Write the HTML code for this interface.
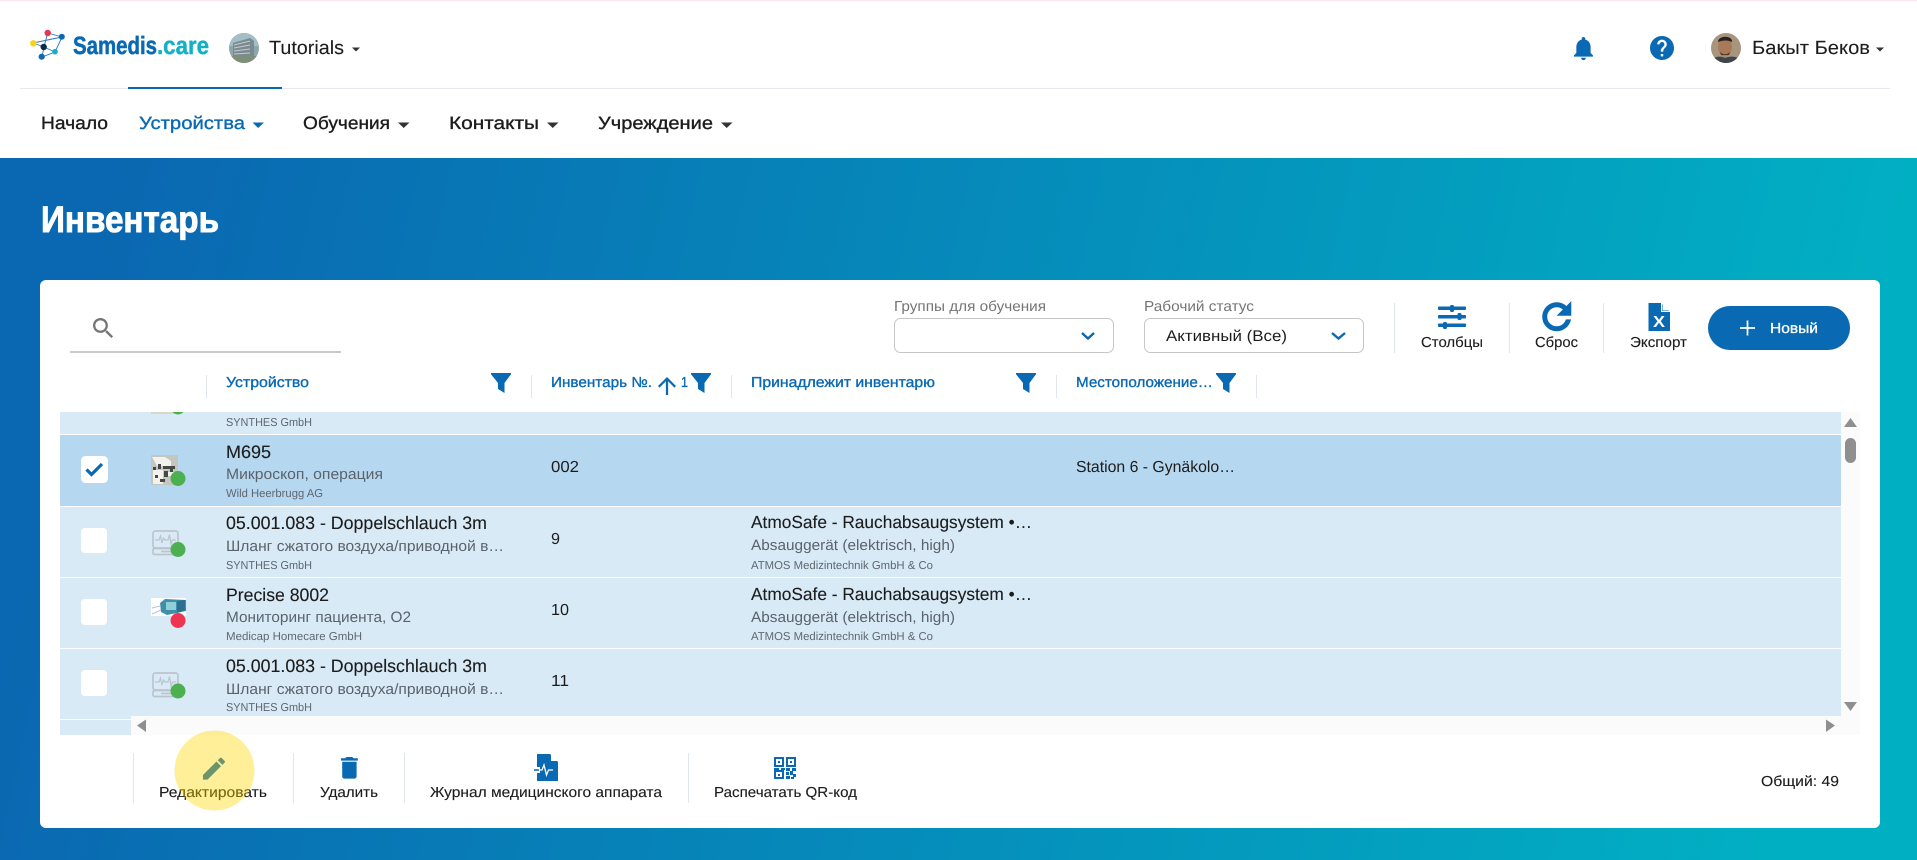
<!DOCTYPE html>
<html lang="ru">
<head>
<meta charset="utf-8">
<title>Инвентарь</title>
<style>
html,body{margin:0;padding:0;background:#fff;width:1917px;height:860px;overflow:hidden}
svg{display:block}
text{font-family:"Liberation Sans",Arial,sans-serif;text-rendering:geometricPrecision}
.m{font-size:18px;fill:#1c1c1c;stroke:#1c1c1c;stroke-width:.12}
.s{font-size:15px;fill:#5a636b}
.t{font-size:11.5px;fill:#5f676e}
.h{font-size:14.5px;fill:#0a69b3;stroke:#0a69b3;stroke-width:.35}
.n{font-size:18px;fill:#1c1c1c;stroke:#1c1c1c;stroke-width:.35}
.a{font-size:14.5px;fill:#1c1c1c;stroke:#1c1c1c;stroke-width:.12}
.l{font-size:14.5px;fill:#757575}
.sep{stroke:#e2e7ee;stroke-width:1}
</style>
</head>
<body>
<svg xmlns="http://www.w3.org/2000/svg" width="1917" height="860" viewBox="0 0 1917 860">
<defs>
<linearGradient id="bg" gradientUnits="userSpaceOnUse" x1="80" y1="300" x2="1800" y2="680">
<stop offset="0" stop-color="#0a67b1"/><stop offset="1" stop-color="#01afc3"/>
</linearGradient>
<path id="f" d="M0 0H20V1.2L13.5 10V20L7 16V10L0 1.2Z" fill="#0a69b3"/>
<clipPath id="c1"><circle cx="244" cy="48" r="15"/></clipPath>
<clipPath id="c2"><circle cx="1726" cy="48" r="15"/></clipPath>
<clipPath id="c3"><rect x="60" y="412" width="200" height="22"/></clipPath>
<g id="dev" fill="none" stroke="#bcc4cb" stroke-width="1.700">
<rect x="1" y="1" width="25" height="17" rx="2.500"/>
<rect x="1" y="18.500" width="26" height="6" rx="1.500"/>
<path d="M3 10H7L8.500 6L10 13L11.500 8L13 10H16L17.500 4.500L19 14L20.500 10H24" stroke-width="1.200"/>
<path d="M9 21.500H20" stroke-width="1.700"/>
</g>
</defs>

<!-- header -->
<rect width="1917" height="158" fill="#fff"/>
<rect width="1917" height="1" fill="#fde6ec"/>
<rect x="20" y="88" width="1870" height="1" fill="#e6e9ef"/>
<rect x="128" y="87" width="154" height="2" fill="#0a69b3"/>

<!-- logo -->
<path d="M33 43L44 47L55 52M47.700 33L44 47L42 57L55 52L62 37L47.700 33M33 43L62 37" stroke="#2a78b8" stroke-width=".9" fill="none"/>
<circle cx="47.700" cy="33" r="3.200" fill="#ea3450"/>
<circle cx="33.300" cy="43.300" r="3.200" fill="#fcd116"/>
<circle cx="61.800" cy="36.700" r="3" fill="#0a69b3"/>
<circle cx="43.700" cy="47" r="3.200" fill="#0b2a4a"/>
<circle cx="55" cy="51.700" r="2.800" fill="#12b1c7"/>
<circle cx="41.700" cy="56.700" r="3.100" fill="#0a69b3"/>
<text x="73" y="54" font-size="25" font-weight="700" fill="#0a69b3" stroke="#0a69b3" stroke-width=".5" textLength="84" lengthAdjust="spacingAndGlyphs">Samedis</text>
<text x="157" y="54" font-size="25" font-weight="700" fill="#12b1c7" stroke="#12b1c7" stroke-width=".4" textLength="52" lengthAdjust="spacingAndGlyphs">.care</text>

<!-- workspace -->
<g clip-path="url(#c1)">
<rect x="229" y="33" width="30" height="30" fill="#8ba6ad"/>
<path d="M229 33H259V46H229Z" fill="#a3bec6"/>
<path d="M233 43L250 38L254 41V58H233Z" fill="#7b8a90"/>
<path d="M234 45L250 41M234 48L250 45M234 51L250 49M234 54L250 53" stroke="#c4ccd0" stroke-width="1"/>
<rect x="229" y="56" width="30" height="7" fill="#7d8f78"/>
</g>
<text x="269" y="54" class="n" style="stroke-width:.1;font-size:19px" textLength="75" lengthAdjust="spacingAndGlyphs">Tutorials</text>
<path d="M352 47.500H360L356 51.500Z" fill="#333"/>

<!-- nav -->
<text x="41" y="129" class="n" textLength="67" lengthAdjust="spacingAndGlyphs">Начало</text>
<text x="139" y="129" class="n" style="fill:#0a69b3;stroke:#0a69b3" textLength="106" lengthAdjust="spacingAndGlyphs">Устройства</text>
<path d="M252.500 122.500H264L258.200 128Z" fill="#0a69b3"/>
<text x="303" y="129" class="n" textLength="87" lengthAdjust="spacingAndGlyphs">Обучения</text>
<path d="M398 122.500H409.500L403.700 128Z" fill="#333"/>
<text x="449" y="129" class="n" textLength="90" lengthAdjust="spacingAndGlyphs">Контакты</text>
<path d="M547 122.500H558.500L552.700 128Z" fill="#333"/>
<text x="598" y="129" class="n" textLength="115" lengthAdjust="spacingAndGlyphs">Учреждение</text>
<path d="M721 122.500H732.500L726.700 128Z" fill="#333"/>

<!-- header right -->
<path transform="translate(1569.200 34) scale(1.19)" fill="#0a69b3" d="M12 22c1.100 0 2-.9 2-2h-4c0 1.100.89 2 2 2zm6-6v-5c0-3.070-1.640-5.640-4.500-6.320V4c0-.83-.67-1.500-1.500-1.500s-1.500.67-1.500 1.500v.68C7.630 5.360 6 7.920 6 11v5l-2 2v1h16v-1l-2-2z"/>
<path transform="translate(1647.600 33.600) scale(1.2)" fill="#0a69b3" d="M12 2C6.480 2 2 6.480 2 12s4.480 10 10 10 10-4.480 10-10S17.520 2 12 2zm1 17h-2v-2h2v2zm2.070-7.750l-.9.92C13.450 12.900 13 13.500 13 15h-2v-.5c0-1.100.45-2.100 1.170-2.830l1.240-1.260c.37-.36.59-.86.59-1.410 0-1.100-.9-2-2-2s-2 .9-2 2H8c0-2.210 1.790-4 4-4s4 1.790 4 4c0 .88-.36 1.680-.93 2.250z"/>
<g clip-path="url(#c2)">
<rect x="1711" y="33" width="30" height="30" fill="#a8957d"/>
<ellipse cx="1725" cy="47" rx="7" ry="9.500" fill="#a87a58"/>
<path d="M1718 42C1718 35 1733 35 1732 42C1728 40 1723 40 1718 42Z" fill="#2a211c"/>
<path d="M1720 52C1723 55 1727 55 1730 52L1729 55H1721Z" fill="#4a3528"/>
<path d="M1711 63V60C1716 56 1721 56 1725 58C1730 56 1736 56 1741 60V63Z" fill="#3f454b"/>
</g>
<text x="1752" y="54" class="n" style="stroke-width:.1;font-size:19px" textLength="118" lengthAdjust="spacingAndGlyphs">Бакыт Беков</text>
<path d="M1876 47.500H1884L1880 51.500Z" fill="#333"/>

<!-- hero -->
<rect y="158" width="1917" height="702" fill="url(#bg)"/>
<text x="41" y="232" font-size="37" font-weight="700" fill="#fff" stroke="#fff" stroke-width=".9" textLength="178" lengthAdjust="spacingAndGlyphs">Инвентарь</text>

<!-- card -->
<rect x="40" y="280" width="1840" height="548" rx="6" fill="#fff"/>

<!-- search -->
<path transform="translate(89.600 314.600) scale(1.143)" fill="#757575" d="M15.500 14h-.79l-.28-.27C15.410 12.590 16 11.110 16 9.500 16 5.910 13.090 3 9.500 3S3 5.910 3 9.500 5.910 16 9.500 16c1.610 0 3.090-.59 4.230-1.570l.27.28v.79l5 4.990L20.490 19l-4.990-5zm-6 0C7.010 14 5 11.990 5 9.500S7.010 5 9.500 5 14 7.010 14 9.500 11.990 14 9.500 14z"/>
<rect x="70" y="351.500" width="271" height="1" fill="#949494"/>

<!-- selects -->
<text x="894" y="311" class="l" textLength="152" lengthAdjust="spacingAndGlyphs">Группы для обучения</text>
<rect x="894.500" y="318.500" width="219" height="34" rx="6" fill="#fff" stroke="#c6c6c6"/>
<path d="M1082 333L1088 338.500L1094 333" fill="none" stroke="#0a69b3" stroke-width="2.400"/>
<text x="1144" y="311" class="l" textLength="110" lengthAdjust="spacingAndGlyphs">Рабочий статус</text>
<rect x="1144.500" y="318.500" width="219" height="34" rx="6" fill="#fff" stroke="#c6c6c6"/>
<text x="1166" y="341" font-size="15.500" fill="#1c1c1c" textLength="121" lengthAdjust="spacingAndGlyphs">Активный (Все)</text>
<path d="M1332 333L1338.500 338.500L1345 333" fill="none" stroke="#0a69b3" stroke-width="2.400"/>

<!-- toolbar -->
<line class="sep" x1="1394.500" y1="303" x2="1394.500" y2="353"/>
<line class="sep" x1="1509.500" y1="303" x2="1509.500" y2="353"/>
<line class="sep" x1="1603.500" y1="303" x2="1603.500" y2="353"/>
<g fill="#0a69b3">
<rect x="1438" y="306.500" width="28" height="3.500" rx="1"/>
<rect x="1438" y="315" width="28" height="3.500" rx="1"/>
<rect x="1438" y="323.500" width="28" height="3.500" rx="1"/>
<rect x="1450" y="305" width="4" height="7" rx="1.500"/>
<rect x="1457.500" y="313" width="4" height="7" rx="1.500"/>
<rect x="1443" y="322" width="4" height="7" rx="1.500"/>
</g>
<text x="1421" y="347" class="a" textLength="62" lengthAdjust="spacingAndGlyphs">Столбцы</text>
<path transform="translate(1536.100 296.100) scale(1.72)" fill="#0a69b3" stroke="#0a69b3" stroke-width=".9" d="M17.650 6.350C16.200 4.900 14.210 4 12 4c-4.420 0-7.990 3.580-7.990 8s3.570 8 7.990 8c3.730 0 6.840-2.550 7.730-6h-2.080c-.82 2.330-3.040 4-5.650 4-3.310 0-6-2.690-6-6s2.690-6 6-6c1.660 0 3.140.69 4.220 1.780L13 11h7V4l-2.350 2.350z"/>
<text x="1535" y="347" class="a" textLength="43" lengthAdjust="spacingAndGlyphs">Сброс</text>
<path d="M1648.500 303H1661L1670 312V331H1648.500Z" fill="#0a69b3"/>
<path d="M1662.500 303L1670 310.500H1662.500Z" fill="#fff"/>
<path d="M1661.500 303V311.500H1670" fill="none" stroke="#fff" stroke-width="1"/>
<text x="1653" y="327" font-size="16" font-weight="700" fill="#fff" textLength="12" lengthAdjust="spacingAndGlyphs">X</text>
<text x="1630" y="347" class="a" textLength="57" lengthAdjust="spacingAndGlyphs">Экспорт</text>
<rect x="1708" y="306" width="142" height="44" rx="22" fill="#0a69b3"/>
<path d="M1747.500 320.500V335.500M1740 328H1755" stroke="#fff" stroke-width="1.700" fill="none"/>
<text x="1770" y="333" font-size="14.500" fill="#fff" stroke="#fff" stroke-width=".3" textLength="48" lengthAdjust="spacingAndGlyphs">Новый</text>

<!-- column headers -->
<line class="sep" x1="206.500" y1="375" x2="206.500" y2="398"/>
<text x="226" y="387" class="h" textLength="83" lengthAdjust="spacingAndGlyphs">Устройство</text>
<use href="#f" x="491" y="373"/>
<line class="sep" x1="531.500" y1="375" x2="531.500" y2="398"/>
<text x="551" y="387" class="h" textLength="101" lengthAdjust="spacingAndGlyphs">Инвентарь №.</text>
<path transform="translate(653.500 372.500) scale(1.125)" fill="#0a69b3" d="M4 12l1.410 1.410L11 7.830V20h2V7.830l5.580 5.590L20 12l-8-8-8 8z"/>
<text x="681" y="387" class="h" textLength="7" lengthAdjust="spacingAndGlyphs">1</text>
<use href="#f" x="691" y="373"/>
<line class="sep" x1="731.500" y1="375" x2="731.500" y2="398"/>
<text x="751" y="387" class="h" textLength="184" lengthAdjust="spacingAndGlyphs">Принадлежит инвентарю</text>
<use href="#f" x="1016" y="373"/>
<line class="sep" x1="1056.500" y1="375" x2="1056.500" y2="398"/>
<text x="1076" y="387" class="h" textLength="137" lengthAdjust="spacingAndGlyphs">Местоположение…</text>
<use href="#f" x="1216" y="373"/>
<line class="sep" x1="1256.500" y1="375" x2="1256.500" y2="398"/>

<!-- rows -->
<rect x="60" y="412" width="1781" height="22" fill="#d9eaf7"/>
<rect x="60" y="435" width="1781" height="71" fill="#b6d7f0"/>
<rect x="60" y="507" width="1781" height="70" fill="#d9eaf7"/>
<rect x="60" y="578" width="1781" height="70" fill="#d9eaf7"/>
<rect x="60" y="649" width="1781" height="70" fill="#d9eaf7"/>
<rect x="60" y="720" width="71" height="15" fill="#d9eaf7"/>

<!-- partial row -->
<g clip-path="url(#c3)">
<rect x="151" y="400" width="27" height="14" fill="#dcd6c6"/>
<circle cx="178" cy="407" r="7.500" fill="#4caf50"/>
</g>
<text x="226" y="426" class="t" textLength="86" lengthAdjust="spacingAndGlyphs">SYNTHES GmbH</text>

<!-- row M695 -->
<rect x="81" y="456" width="27" height="27" rx="4.500" fill="#fff"/>
<path d="M86.500 469.500L91.500 474.500L102 464" fill="none" stroke="#0a69b3" stroke-width="3.200"/>
<rect x="151" y="455" width="27" height="30" fill="#c4c6c2"/>
<path d="M152 457H165L171 461V466H157ZM153 470H163V484H153ZM166 472H177V476H166Z" fill="#f2f1ec"/>
<g fill="#454845">
<rect x="158" y="464" width="3" height="5"/><rect x="163" y="466" width="12" height="3"/>
<rect x="153" y="467" width="3" height="3"/><rect x="164" y="471" width="4" height="6"/>
<rect x="155" y="475" width="3" height="3"/><rect x="160" y="479" width="5" height="3"/><rect x="170" y="469" width="3" height="3"/>
</g>
<circle cx="178" cy="478.500" r="7.500" fill="#4caf50"/>
<text x="226" y="458" class="m" textLength="45" lengthAdjust="spacingAndGlyphs">M695</text>
<text x="226" y="479" class="s" textLength="157" lengthAdjust="spacingAndGlyphs">Микроскоп, операция</text>
<text x="226" y="497" class="t" textLength="97" lengthAdjust="spacingAndGlyphs">Wild Heerbrugg AG</text>
<text x="551" y="472" font-size="16" fill="#1c1c1c" textLength="28" lengthAdjust="spacingAndGlyphs">002</text>
<text x="1076" y="472" font-size="16" fill="#1c1c1c" textLength="159" lengthAdjust="spacingAndGlyphs">Station 6 - Gynäkolo…</text>

<!-- row 2 -->
<rect x="81" y="528" width="26" height="25" rx="4" fill="#fff"/>
<use href="#dev" x="152" y="530"/>
<circle cx="178" cy="549.500" r="7.500" fill="#4caf50"/>
<text x="226" y="529" class="m" textLength="261" lengthAdjust="spacingAndGlyphs">05.001.083 - Doppelschlauch 3m</text>
<text x="226" y="551" class="s" textLength="278" lengthAdjust="spacingAndGlyphs">Шланг сжатого воздуха/приводной в…</text>
<text x="226" y="569" class="t" textLength="86" lengthAdjust="spacingAndGlyphs">SYNTHES GmbH</text>
<text x="551" y="544" font-size="16" fill="#1c1c1c" textLength="9" lengthAdjust="spacingAndGlyphs">9</text>
<text x="751" y="528" font-size="17.500" fill="#1c1c1c" stroke="#1c1c1c" stroke-width=".12" textLength="281" lengthAdjust="spacingAndGlyphs">AtmoSafe - Rauchabsaugsystem •…</text>
<text x="751" y="550" class="s" textLength="204" lengthAdjust="spacingAndGlyphs">Absauggerät (elektrisch, high)</text>
<text x="751" y="569" class="t" textLength="182" lengthAdjust="spacingAndGlyphs">ATMOS Medizintechnik GmbH &amp; Co</text>

<!-- row 3 -->
<rect x="81" y="599" width="26" height="26" rx="4" fill="#fff"/>
<rect x="151" y="598" width="35" height="18" fill="#fff"/>
<path d="M160 603L165 599L186 600V611L167 615L161 612Z" fill="#3f8fa8"/>
<rect x="166" y="602" width="10" height="8" fill="#8fd0d8"/>
<path d="M177 601L185 600V610L177 613Z" fill="#2d6f90"/>
<path d="M152 608L160 606M152 614L161 610" stroke="#b4c6cc" stroke-width="1"/>
<circle cx="178" cy="620.500" r="7.500" fill="#ee3450"/>
<text x="226" y="601" class="m" textLength="103" lengthAdjust="spacingAndGlyphs">Precise 8002</text>
<text x="226" y="622" class="s" textLength="185" lengthAdjust="spacingAndGlyphs">Мониторинг пациента, O2</text>
<text x="226" y="640" class="t" textLength="136" lengthAdjust="spacingAndGlyphs">Medicap Homecare GmbH</text>
<text x="551" y="615" font-size="16" fill="#1c1c1c" textLength="18" lengthAdjust="spacingAndGlyphs">10</text>
<text x="751" y="600" font-size="17.500" fill="#1c1c1c" stroke="#1c1c1c" stroke-width=".12" textLength="281" lengthAdjust="spacingAndGlyphs">AtmoSafe - Rauchabsaugsystem •…</text>
<text x="751" y="622" class="s" textLength="204" lengthAdjust="spacingAndGlyphs">Absauggerät (elektrisch, high)</text>
<text x="751" y="640" class="t" textLength="182" lengthAdjust="spacingAndGlyphs">ATMOS Medizintechnik GmbH &amp; Co</text>

<!-- row 4 -->
<rect x="81" y="670" width="26" height="26" rx="4" fill="#fff"/>
<use href="#dev" x="152" y="672"/>
<circle cx="178" cy="691" r="7.500" fill="#4caf50"/>
<text x="226" y="672" class="m" textLength="261" lengthAdjust="spacingAndGlyphs">05.001.083 - Doppelschlauch 3m</text>
<text x="226" y="694" class="s" textLength="278" lengthAdjust="spacingAndGlyphs">Шланг сжатого воздуха/приводной в…</text>
<text x="226" y="711" class="t" textLength="86" lengthAdjust="spacingAndGlyphs">SYNTHES GmbH</text>
<text x="551" y="686" font-size="16" fill="#1c1c1c" textLength="18" lengthAdjust="spacingAndGlyphs">11</text>

<!-- scrollbars -->
<rect x="1841" y="412" width="19" height="323" fill="#fbfbfb"/>
<rect x="131" y="716" width="1729" height="19" fill="#fbfbfb"/>
<path d="M1850.500 418L1857 427H1844Z" fill="#8f8f8f"/>
<path d="M1850.500 711L1857 702H1844Z" fill="#8f8f8f"/>
<rect x="1845" y="438" width="11" height="25" rx="5.500" fill="#8f8f8f"/>
<path d="M137 725.500L146 719.500V732Z" fill="#8f8f8f"/>
<path d="M1835 725.500L1826 719.500V732Z" fill="#8f8f8f"/>

<!-- bottom actions -->
<line class="sep" x1="133.500" y1="753" x2="133.500" y2="803"/>
<line class="sep" x1="293.500" y1="753" x2="293.500" y2="803"/>
<line class="sep" x1="404.500" y1="753" x2="404.500" y2="803"/>
<line class="sep" x1="688.500" y1="753" x2="688.500" y2="803"/>
<path transform="translate(199.300 754) scale(1.22)" fill="#0a69b3" d="M3 17.250V21h3.750L17.810 9.940l-3.750-3.750L3 17.250zM20.710 7.040c.39-.39.39-1.020 0-1.410l-2.340-2.340c-.39-.39-1.020-.39-1.410 0l-1.830 1.830 3.750 3.750 1.830-1.830z"/>
<text x="159" y="797" class="a" textLength="108" lengthAdjust="spacingAndGlyphs">Редактировать</text>
<path transform="translate(335 753.400) scale(1.2)" fill="#0a69b3" d="M6 19c0 1.100.9 2 2 2h8c1.100 0 2-.9 2-2V7H6v12zM19 4h-3.500l-1-1h-5l-1 1H5v2h14V4z"/>
<text x="320" y="797" class="a" textLength="58" lengthAdjust="spacingAndGlyphs">Удалить</text>
<path d="M537 754H550L558 762V781H537Z" fill="#0a69b3"/>
<path d="M551 754L558 761H551Z" fill="#fff"/>
<rect x="536" y="767" width="4" height="6" fill="#fff"/>
<path d="M534 770H539" fill="none" stroke="#0a69b3" stroke-width="1.500"/>
<path d="M540 770H542L544 765L546.500 775L548.500 770H553" fill="none" stroke="#fff" stroke-width="1.300"/>
<text x="430" y="797" class="a" textLength="232" lengthAdjust="spacingAndGlyphs">Журнал медицинского аппарата</text>
<g fill="none" stroke="#0a69b3" stroke-width="2">
<rect x="775" y="758" width="8" height="8"/>
<rect x="787" y="758" width="8" height="8"/>
<rect x="775" y="771" width="8" height="7"/>
</g>
<g fill="#0a69b3">
<rect x="778" y="761" width="2" height="2"/><rect x="790" y="761" width="2" height="2"/><rect x="778" y="774" width="2" height="2"/>
<rect x="774" y="768" width="5" height="2"/><rect x="781" y="768" width="4" height="2"/>
<rect x="786" y="768" width="4" height="3"/><rect x="792" y="768" width="4" height="3"/>
<rect x="786" y="772" width="3" height="3"/><rect x="790" y="771" width="3" height="4"/>
<rect x="793" y="774" width="3" height="3"/><rect x="786" y="776" width="4" height="3"/><rect x="791" y="777" width="3" height="2"/>
</g>
<text x="714" y="797" class="a" textLength="143" lengthAdjust="spacingAndGlyphs">Распечатать QR-код</text>
<text x="1761" y="786" class="a" textLength="78" lengthAdjust="spacingAndGlyphs">Общий: 49</text>

<!-- highlight -->
<circle cx="214.500" cy="770.500" r="40" fill="rgb(255,215,0)" fill-opacity=".4"/>
</svg>
</body>
</html>
